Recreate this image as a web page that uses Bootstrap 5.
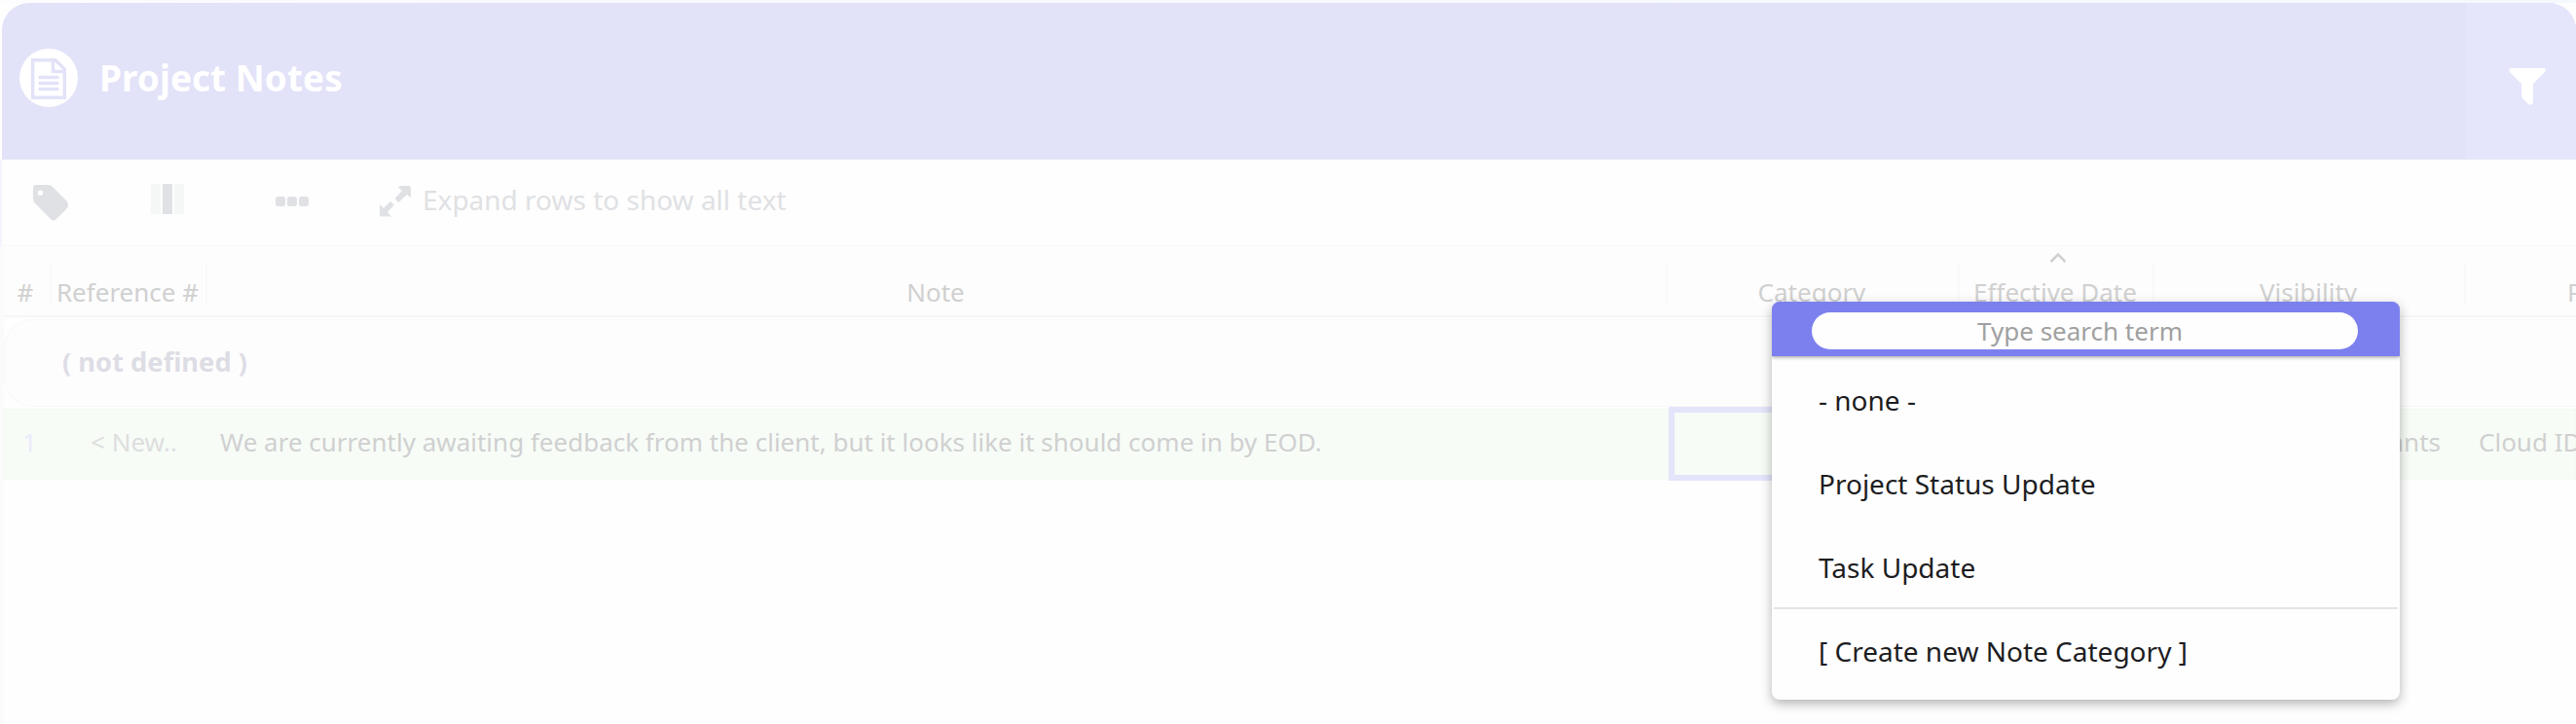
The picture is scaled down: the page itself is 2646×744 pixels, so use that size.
<!DOCTYPE html>
<html lang="en">
<head>
<meta charset="utf-8">
<title>Project Notes</title>
<link href="https://cdn.jsdelivr.net/npm/bootstrap@5.3.0/dist/css/bootstrap.min.css" rel="stylesheet">
<style>
body{width:2646px;height:744px;overflow:hidden;background:#fefefe;font-family:"Noto Sans",sans-serif;font-size:26px;line-height:36px;color:#d0d0d0}
.top-edge{height:3px;background:linear-gradient(90deg,#fdfdff,#f8f8ff 20%,#f5f9fc)}
.panel-head{height:161px;border-radius:28px 28px 0 0;background:#e2e2f8;margin-left:2px;color:#fff}
.panel-title{font-size:37px;font-weight:700;line-height:52px;margin-left:22px;padding-bottom:1px}
.filter-zone{width:113px;background:#e5e5fb;padding:66px 0 0 44px}
.tools{height:89px;border-left:2px solid #f4f4ff;border-bottom:1px solid #f9f9f9;font-size:28px;color:#dfe1e4;background:#fefefe}
.grid-area{border-left:4px solid #fbfbfb;height:491px}
.grid-row{display:grid;grid-template-columns:49px 160px 1500px 300px 200px 320px 240px}
.grid-head{height:73px;padding-top:17px;border-bottom:2px solid #f6f6f6;background:#fdfdfd;text-align:center}
.grid-head>div{height:43px;border-right:2px solid #f9f9f9;padding:12px 2px 0 0;white-space:nowrap}
.group-row{height:90px;margin-top:2px;border:1px solid #f8f8f8;border-right:0;border-radius:30px 0 0 30px;background:#fdfdfd;font-size:27.3px;font-weight:700;color:#dddde5;padding:25px 0 0 59px}
.note-row{height:73px;margin-top:2px;background:#f7fcf7;border:1px solid #f1fbf1;white-space:nowrap}
.note-row>div{padding-top:15px}
.picked{border:6px solid #e4e4fb;margin:-3px -4px -2px 0}
.sorter{left:89px;top:-13px}
.pick-menu{left:1820px;top:310px;width:645px;height:409px;border-radius:8px;background:#fefefe;box-shadow:0 4px 12px rgba(0,0,0,.3);font-size:28px;color:#1d1d1f;overflow:hidden}
.pick-search{height:56px;background:#7c80ee;padding:11px 43px 0 41px;box-shadow:0 1px 4px rgba(0,0,0,.4);margin-bottom:2px}
.pick-search input{height:38px;border:0;border-radius:19px;font-size:26px;text-align:center;padding:0 10px 1px 0;background:#fefefe;width:100%;display:block;outline:0}
.pick-search input::placeholder{color:#a0a0a0;opacity:1}
.pick-item{height:86px;line-height:86px;padding-left:46px;margin:0 2px}
.split-line{border-bottom:2px solid #e4e4e4}
</style>
</head>
<body>
<div class="top-edge"></div>
<header class="panel-head d-flex overflow-hidden">
  <div class="d-flex align-items-center flex-grow-1" style="padding:0 0 7px 18px">
    <svg width="60" height="60" viewBox="0 0 60 60"><circle cx="30" cy="30" r="30" fill="#fff"/><g fill="none" stroke="#e2e2f8" stroke-width="3.4"><path d="M13.700 11.700H37L46.300 21V50.300H13.700ZM34.500 12V23.500H46"/><path d="M21 29.500H39M21 35.500H39M21 41.500H39" stroke-linecap="round"/></g></svg>
    <div class="panel-title">Project Notes</div>
  </div>
  <div class="filter-zone"><svg class="d-block" width="38" height="40" viewBox="0 0 38 40"><path d="M2 1H36Q39 2 37 5L25 17V36Q24 40 20 38L14 32Q13 31 13 29V17L1 5Q-1 2 2 1Z" fill="#fff"/></svg></div>
</header>
<div class="tools d-flex">
  <svg width="428" height="88" viewBox="2 164 428 88" fill="#dfe1e4"><path fill-rule="evenodd" d="M37 190H49Q52 190 54 192L69 207Q71 211 69 214L58 225Q55 228 52 225L36 209Q34 207 34 204V193Q34 190 37 190ZM41.500 195.500A2.700 2.700 0 1 0 41.500 200.900A2.700 2.700 0 1 0 41.500 195.500Z"/><path d="M155 189H165V220H155ZM179 189H189V220H179Z" fill="#f5f6f6"/><path d="M167 189H177V220H167Z"/><rect x="283" y="202" width="10" height="10" rx="2.500"/><rect x="295" y="202" width="10" height="10" rx="2.500"/><rect x="307" y="202" width="10" height="10" rx="2.500"/><path d="M411 191H420Q422 191 422 193V203L418 200L409.500 208L405.500 204L413 196L409 192.500ZM390 210L394 214L401 207L405 210.500L398 218L402 222.500H392Q390 222.500 390 220.500Z"/></svg>
  <div style="padding:23px 0 0 4px">Expand rows to show all text</div>
</div>
<main class="grid-area">
  <div class="grid-row grid-head">
    <div style="padding-right:3px">#</div><div>Reference #</div><div>Note</div><div>Category</div>
    <div class="position-relative"><svg class="sorter position-absolute" width="24" height="16" viewBox="0 0 24 16"><path d="M4.500 12L12 4.500L19.500 12" fill="none" stroke="#d0d0d0" stroke-width="2.500"/></svg>Effective Date</div>
    <div>Visibility</div><div class="text-start" style="padding-left:104px">Project</div>
  </div>
  <div class="group-row">( not defined )</div>
  <div class="grid-row note-row">
    <div style="color:#ebebfd;padding-left:18px">1</div><div style="color:#dedede;padding-left:39px">&lt; New..</div><div style="padding-left:12px">We are currently awaiting feedback from the client, but it looks like it should come in by EOD.</div>
    <div class="picked"></div><div></div><div class="text-end" style="padding-right:27px">All Participants</div><div style="padding-left:12px">Cloud IDE</div>
  </div>
</main>
<div class="pick-menu position-absolute">
  <div class="pick-search"><input type="text" placeholder="Type search term"></div>
  <div class="pick-item">- none -</div>
  <div class="pick-item">Project Status Update</div>
  <div class="pick-item split-line">Task Update</div>
  <div class="pick-item">[ Create new Note Category ]</div>
</div>
<script src="https://cdn.jsdelivr.net/npm/bootstrap@5.3.0/dist/js/bootstrap.bundle.min.js"></script>
</body>
</html>
